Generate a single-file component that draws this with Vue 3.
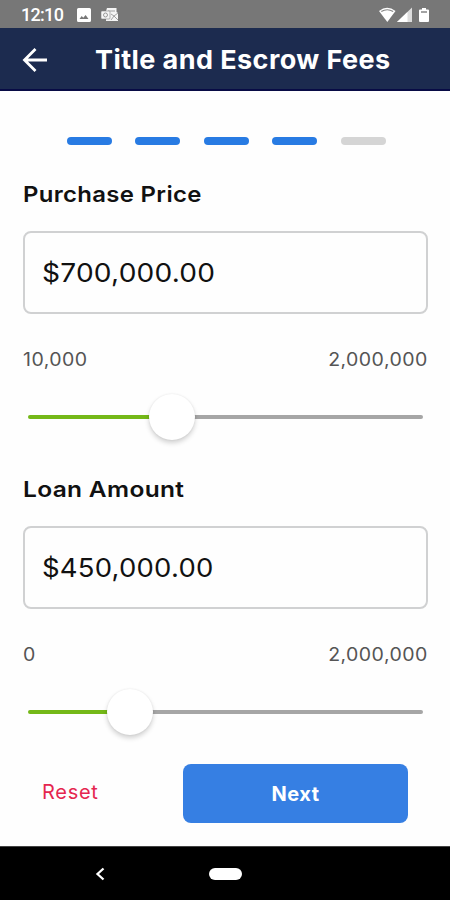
<script setup>
import { ref } from 'vue'

const steps = [true, true, true, true, false]
const fields = ref([
  { id: 'price', label: 'Purchase Price', value: '$700,000.00', min: '10,000', max: '2,000,000', percent: 36.4 },
  { id: 'loan', label: 'Loan Amount', value: '$450,000.00', min: '0', max: '2,000,000', percent: 25.7 },
])
</script>

<template>
  <div class="screen">
    <div class="status">
      <span class="time">12:10</span>
      <svg class="picture" width="14" height="14" viewBox="0 0 14 14">
        <path fill="#fff" fill-rule="evenodd" d="M1.5 0h11A1.5 1.5 0 0 1 14 1.5v11a1.5 1.5 0 0 1-1.5 1.5h-11A1.5 1.5 0 0 1 0 12.500v-11A1.500 1.500 0 0 1 1.500 0zM2.500 11h9L8.600 7 6.300 9.800 4.700 8z" />
      </svg>
      <svg class="mail" width="18" height="14" viewBox="0 0 18 14">
        <path fill="#f5f5f5" d="M6 0h9.500v4l1.500 1v8H5V3z" />
        <path d="M7 3h7M10 6l3 2 4-3M10 12l3-4 4 4" fill="none" stroke="#999" stroke-width=".9" />
        <rect y="3" width="9" height="8" rx="1" fill="#f5f5f5" stroke="#858585" stroke-width=".6" />
        <circle cx="4.500" cy="7" r="2" fill="none" stroke="#999" />
      </svg>
      <svg class="signals" width="52" height="16" viewBox="0 0 52 16">
        <path d="M0 4Q8 -2.500 16.500 4L8.300 15z" fill="#fff" />
        <path d="M2.300 4.600Q8.200.9 14.200 4.600" fill="none" stroke="#858585" stroke-width="1.200" />
        <path d="M18 15L33 .500V15z" fill="#ddd" />
        <path d="M18 15L28.500 5V15z" fill="#fff" />
        <path d="M43 1h4v1.500h2q1 0 1 1V14q0 1-1 1h-8q-1 0-1-1V3.500q0-1 1-1h2z" fill="#fff" />
        <path d="M42 5h6" stroke="#858585" stroke-width="1.500" />
      </svg>
    </div>

    <header class="header">
      <svg width="26" height="26" viewBox="0 0 26 26" fill="none" stroke="#fff" stroke-width="2.800">
        <path d="M13.500 2L2.500 13l11 11M2.500 13H25" />
      </svg>
      <h1>Title and Escrow Fees</h1>
    </header>

    <main class="content">
      <div class="steps">
        <span v-for="(done, i) in steps" :key="i" class="step" :class="{ done }"></span>
      </div>

      <section v-for="field in fields" :key="field.id" class="field" :class="field.id">
        <h2>{{ field.label }}</h2>
        <div class="box"><span class="value">{{ field.value }}</span></div>
        <div class="range">
          <span class="min">{{ field.min }}</span>
          <span class="max">{{ field.max }}</span>
        </div>
        <div class="slider">
          <div class="fill" :style="{ width: field.percent + '%' }"></div>
          <div class="thumb"></div>
          <div class="rest"></div>
        </div>
      </section>

      <div class="actions">
        <button class="reset">Reset</button>
        <button class="next">Next</button>
      </div>
    </main>

    <nav class="nav">
      <svg width="10" height="14" viewBox="0 0 10 14"><path d="M8.500 1.500L2.500 7l6 5.500" fill="none" stroke="#fff" stroke-width="2.300" /></svg>
      <span class="home"></span>
    </nav>
  </div>
</template>

<style>
body {
  margin: 0;
  background: #fefefe;
}
</style>

<style scoped>
.screen {
  width: 450px;
  height: 900px;
  display: flex;
  flex-direction: column;
  overflow: hidden;
  background: #fefefe;
  color: #111;
  font-family: Inter, "Liberation Sans", sans-serif;
  white-space: nowrap;
}
.status {
  height: 28px;
  flex: none;
  box-sizing: border-box;
  display: flex;
  align-items: center;
  padding: 1px 19px 0 21px;
  background: #777;
}
.time {
  width: 56px;
  color: #fff;
  font: 500 18px/28px Roboto, sans-serif;
  letter-spacing: -0.7px;
}
.mail {
  margin-left: 10px;
}
.signals {
  margin-left: auto;
}
.header {
  height: 63px;
  flex: none;
  box-sizing: border-box;
  display: flex;
  align-items: center;
  padding: 3px 0 0 22px;
  background: #1c2b4f;
  border-bottom: 2px solid #080b45;
}
h1 {
  margin: 0 0 0 47px;
  color: #fff;
  font-size: 26px;
  line-height: 32px;
  font-weight: 700;
  letter-spacing: 0.4px;
  transform: scaleX(1.039);
  transform-origin: left;
}
.content {
  flex: 1;
  display: flex;
  flex-direction: column;
  padding: 46px 22px 0 23px;
}
.steps {
  display: flex;
  gap: 23.500px;
  padding-left: 43.500px;
}
.step {
  width: 45px;
  height: 8px;
  border-radius: 4px;
  background: #d5d5d5;
}
.step.done {
  background: #287be3;
}
.field {
  height: 295px;
  flex: none;
}
h2 {
  margin: 0;
  padding-top: 34px;
  font-size: 22px;
  line-height: 30px;
  font-weight: 600;
  letter-spacing: 0.3px;
  transform: scaleX(1.087);
  transform-origin: left;
}
.loan h2 {
  transform: scaleX(1.113);
}
.box {
  height: 83px;
  box-sizing: border-box;
  display: flex;
  align-items: center;
  margin-top: 22px;
  padding-left: 17px;
  border: 2px solid #d0d1d2;
  border-radius: 8px;
  font-size: 26px;
  letter-spacing: 0.2px;
}
.value {
  transform: scaleX(1.08);
  transform-origin: left;
}
.loan .value {
  transform: scaleX(1.057);
}
.range {
  display: flex;
  justify-content: space-between;
  margin-top: 34px;
  color: #555;
  font-size: 18px;
  line-height: 24px;
  letter-spacing: 0.4px;
}
.min,
.max {
  transform: scaleX(1.085);
}
.min {
  transform-origin: left;
}
.max {
  transform-origin: right;
}
.slider {
  display: flex;
  align-items: center;
  height: 48px;
  margin: 21px 5px 0;
}
.fill {
  height: 4px;
  flex: none;
  margin-right: -23px;
  border-radius: 2px;
  background: #74b818;
}
.thumb {
  width: 46px;
  height: 46px;
  flex: none;
  z-index: 1;
  border-radius: 50%;
  background: #fff;
  box-shadow: 0 3px 5px rgba(0, 0, 0, 0.18), 0 0 2px rgba(0, 0, 0, 0.08);
}
.rest {
  flex: 1;
  height: 4px;
  margin-left: -4px;
  border-radius: 2px;
  background: #a6a6a6;
}
.actions {
  display: flex;
  align-items: center;
  justify-content: space-between;
  padding: 29px 20px 0 19px;
}
button {
  padding: 0;
  border: 0;
  font-family: inherit;
}
.reset {
  padding-bottom: 4px;
  background: none;
  color: #e5264f;
  font-size: 20px;
  letter-spacing: 0.7px;
}
.next {
  width: 225px;
  height: 59px;
  border-radius: 8px;
  background: #367fe3;
  color: #fff;
  font-size: 20px;
  font-weight: 700;
  letter-spacing: 0.5px;
}
.nav {
  height: 54px;
  flex: none;
  display: flex;
  align-items: center;
  gap: 104px;
  box-sizing: border-box;
  padding-left: 95px;
  border-top: 1px solid #444;
  background: #000;
}
.home {
  width: 33px;
  height: 12px;
  border-radius: 6px;
  background: #fff;
}
</style>
